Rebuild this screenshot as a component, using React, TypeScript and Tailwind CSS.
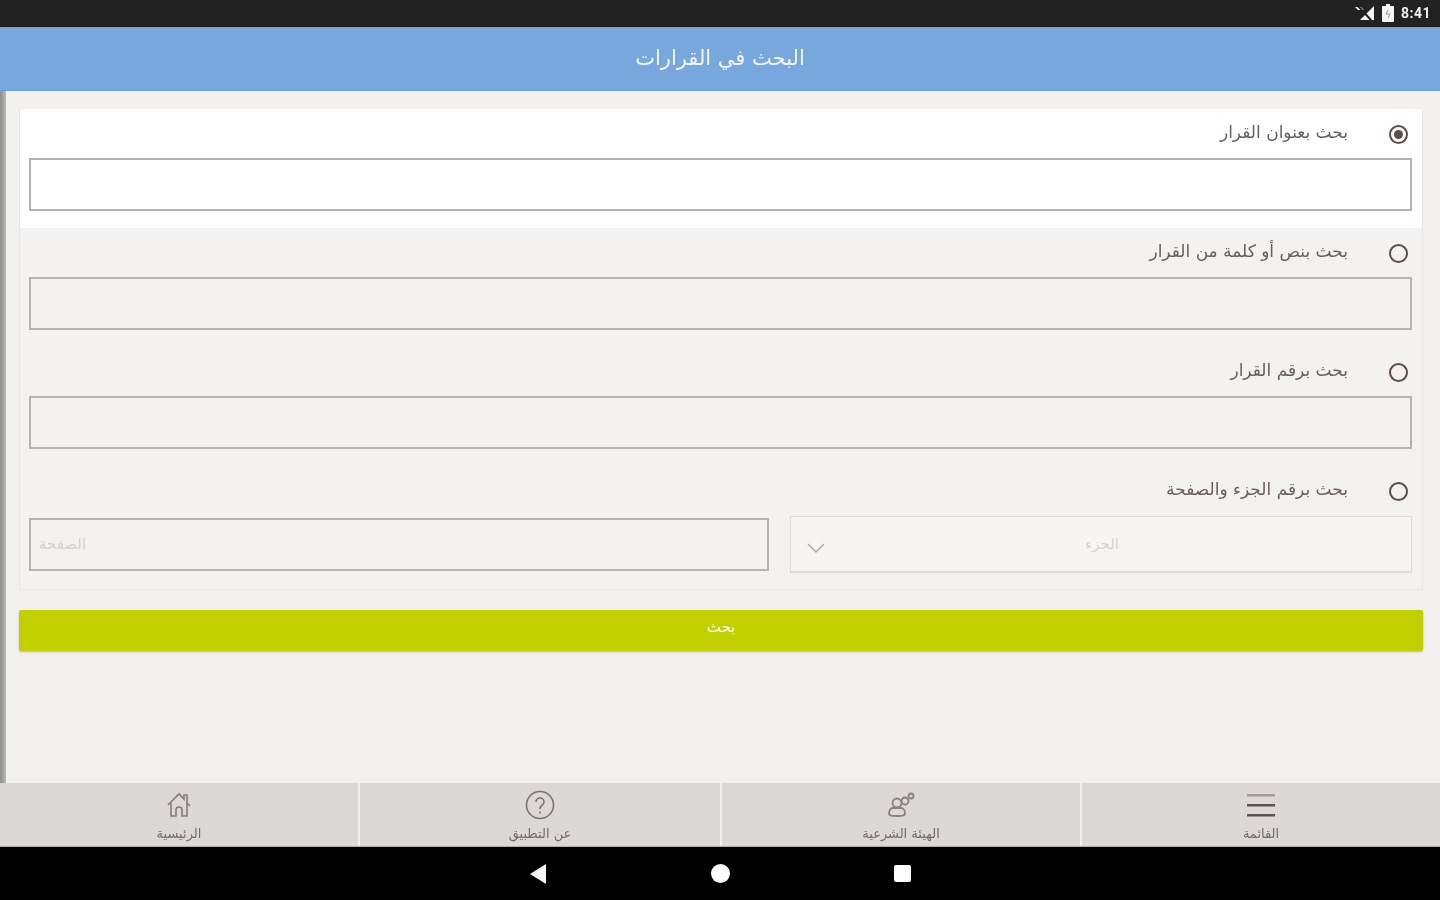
import React from "react";

function Radio({ on }: { on?: boolean }) {
  return (
    <span className="flex h-[19px] w-[19px] items-center justify-center rounded-full border-2 border-[#5f4a4c]">
      {on && <span className="h-[9px] w-[9px] rounded-full bg-[#5f4a4c]" />}
    </span>
  );
}

function Head({ text, on }: { text: string; on?: boolean }) {
  return (
    <div className="flex h-[49px] flex-row-reverse items-center pt-[1px]">
      <div className="mr-[4px] ml-[41px] flex w-[19px] justify-center"><Radio on={on} /></div>
      <span dir="rtl" className="-mt-[5px] text-[17px] leading-[20px] text-[#6b5c5e] blur-[0.4px]">{text}</span>
    </div>
  );
}

function Row({ text, on }: { text: string; on?: boolean }) {
  return (
    <div className={`h-[119px] pr-[10px] pl-[9px] ${on ? "bg-white" : ""}`}>
      <Head text={text} on={on} />
      <div className={`h-[53px] border-2 border-[#b5b3b3] ${on ? "bg-white" : "bg-[#f3f2f0]"}`} />
    </div>
  );
}

function NavItem({ label, children, className }: { label: string; children: React.ReactNode; className: string }) {
  return (
    <div className={`flex flex-col items-center pt-[6px] ${className}`}>
      <div className="flex h-[32px] items-center justify-center">{children}</div>
      <span dir="rtl" className="mt-[6px] text-[13px] leading-[14px] text-[#756a6a] blur-[0.4px]">{label}</span>
    </div>
  );
}

export default function App() {
  return (
    <div className="flex h-[900px] w-[1440px] flex-col overflow-hidden bg-[#f2f1ef] font-['DejaVu_Sans','Noto_Sans',sans-serif]">
      {/* status bar */}
      <div className="flex h-[27px] items-center justify-end gap-[7px] border-b border-[#1a1a1a] bg-[#222222] pr-[9px]">
        <svg width="20" height="16" viewBox="0 0 20 16" className="blur-[0.4px]">
          <path d="M19 1v14H5z" fill="#f4f4f4" />
          <path d="M0 2h6l3 3H3z" fill="#f4f4f4" />
          <path d="M3 1l13 14" stroke="#222" strokeWidth="2" />
        </svg>
        <svg width="12" height="18" viewBox="0 0 12 18" className="blur-[0.3px]">
          <path d="M4 0h4v2h3a1 1 0 0 1 1 1v14a1 1 0 0 1-1 1H1a1 1 0 0 1-1-1V3a1 1 0 0 1 1-1h3z" fill="#f4f4f4" />
          <path d="M6 6l-2 4h4l-2 4" stroke="#999" strokeWidth="1" fill="none" />
        </svg>
        <span className="font-['Roboto',sans-serif] text-[14px] font-bold leading-none tracking-[0.5px] text-[#eeeeee] blur-[0.4px]">8:41</span>
      </div>
      {/* header */}
      <div className="flex h-[64px] items-center justify-center bg-[#77a7dc] shadow-[inset_0_-1px_0_#6a9dd6]">
        <span dir="rtl" className="-mt-[2px] text-[21px] leading-[28px] text-[#f3f6fb] blur-[0.4px]">البحث في القرارات</span>
      </div>
      {/* body */}
      <div className="flex min-h-0 flex-1">
        <div className="w-[6px] bg-gradient-to-r from-[#8f8f8d] to-[#b9b8b6]" />
        <div className="flex-1 pt-[18px] pr-[17px] pl-[13px]">
          <div className="h-[481px] border border-t-0 border-[#e8e7e5] bg-[#f3f2f0]">
            <Row on text="بحث بعنوان القرار" />
            <Row text="بحث بنص أو كلمة من القرار" />
            <Row text="بحث برقم القرار" />
            <div className="pr-[10px] pl-[9px]">
              <Head text="بحث برقم الجزء والصفحة" />
              <div className="mt-[1px] flex items-center gap-[21px]">
                <div dir="rtl" className="flex h-[53px] w-[740px] items-center justify-end border-2 border-[#b5b3b3] bg-[#f3f2f0] pl-[8px]">
                  <span className="text-[15px] text-[#d4d2d0] blur-[0.4px]">الصفحة</span>
                </div>
                <div className="relative flex h-[57px] flex-1 items-center justify-center border border-b-2 border-[#dcdbd9] bg-[#f6f5f3]">
                  <span dir="rtl" className="ml-[2px] pt-[1px] text-[15px] text-[#d4d2d0] blur-[0.4px]">الجزء</span>
                  <svg width="20" height="12" viewBox="0 0 20 12" className="absolute bottom-[17px] left-[15px]">
                    <path d="M2 2l8 8 8-8" fill="none" stroke="#a9a9a7" strokeWidth="1.5" />
                  </svg>
                </div>
              </div>
            </div>
          </div>
          <button className="mt-[20px] flex h-[41px] w-full items-center justify-center rounded-[2px] bg-[#c2d000] shadow-[0_1px_2px_rgba(0,0,0,0.25)]">
            <span dir="rtl" className="pb-[6px] text-[15px] text-white blur-[0.3px]">بحث</span>
          </button>
        </div>
      </div>
      {/* tab bar */}
      <div className="flex h-[64px] border-b border-[#b4aeab] bg-[#dcd8d5]">
        <NavItem label="الرئيسية" className="w-[360px] border-r-2 border-[#f1efed]">
          <svg width="28" height="28" viewBox="0 0 28 28" fill="none" stroke="#867b7b" strokeWidth="1.6" className="blur-[0.3px]">
            <path d="M3 14L14 3l5 5V4h3v8l3 3" />
            <path d="M6 12v13h5v-6a3 3 0 0 1 6 0v6h5V12" />
          </svg>
        </NavItem>
        <NavItem label="عن التطبيق" className="w-[362px] border-r-2 border-[#f1efed]">
          <svg width="30" height="30" viewBox="0 0 30 30" fill="none" stroke="#7c7172" strokeWidth="1.6" className="blur-[0.3px]">
            <circle cx="15" cy="15" r="13.5" />
            <path d="M11 12c0-2.5 2-4 4-4s4 1.5 4 4c0 3-4 3.5-4 7" />
            <circle cx="15" cy="22.5" r="1" fill="#7c7172" stroke="none" />
          </svg>
        </NavItem>
        <NavItem label="الهيئة الشرعية" className="w-[360px] border-r-2 border-[#f1efed]">
          <svg width="30" height="26" viewBox="0 0 30 26" fill="none" stroke="#8a7f7f" strokeWidth="1.8" className="blur-[0.4px]">
            <circle cx="11" cy="11" r="4.5" />
            <path d="M3 21c0-4 3-5 4-5h8c2 0 4 2 4 5s-3 3-8 3-8 0-8-3z" />
            <circle cx="19" cy="9" r="3.5" />
            <circle cx="25" cy="4" r="2.5" />
          </svg>
        </NavItem>
        <NavItem label="القائمة" className="flex-1">
          <svg width="28" height="24" viewBox="0 0 28 24" className="blur-[0.3px]">
            <rect y="1" width="28" height="2.5" fill="#a39a9a" />
            <rect y="11" width="28" height="2.5" fill="#5f5052" />
            <rect y="21" width="28" height="2.5" fill="#5f5052" />
          </svg>
        </NavItem>
      </div>
      {/* android nav */}
      <div className="flex h-[53px] items-center bg-black pl-[529px]">
        <svg width="18" height="20" viewBox="0 0 18 20"><path d="M1 10L17 0v20z" fill="#f5f5f5" /></svg>
        <span className="ml-[164px] h-[19px] w-[19px] rounded-full bg-white" />
        <span className="ml-[164px] h-[17px] w-[17px] rounded-[2px] bg-white" />
      </div>
    </div>
  );
}
